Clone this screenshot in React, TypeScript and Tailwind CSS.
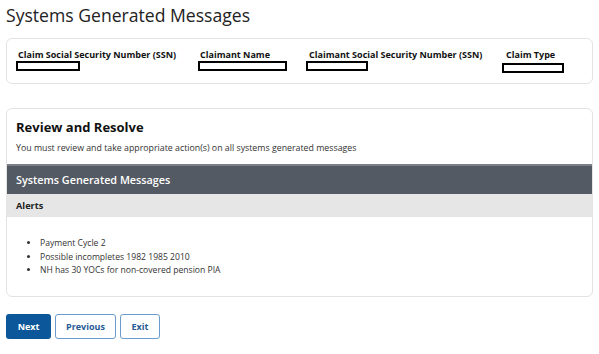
export default function App() {
    const fields = [
        { label: 'Claim Social Security Number (SSN)', col: 'w-[182px]', box: 'w-[64px] ml-[-2px]' },
        { label: 'Claimant Name', col: 'w-[109px]', box: 'w-[89px] ml-[-2px]' },
        { label: 'Claimant Social Security Number (SSN)', col: 'w-[197px]', box: 'w-[62px] ml-[-3px]' },
        { label: 'Claim Type', col: 'w-[70px]', box: 'w-[62px] ml-[-4px] mt-[2px]' },
    ]

    const alerts = [
        'Payment Cycle 2',
        'Possible incompletes 1982 1985 2010',
        'NH has 30 YOCs for non-covered pension PIA',
    ]

    return (
        <div className="min-h-screen bg-white px-[6px] pt-[1px] text-[#222] font-['Open_Sans',sans-serif]">
            <h1 className="text-[17.6px] leading-[28px] text-[#222]">Systems Generated Messages</h1>

            {/* Datos del reclamo */}
            <div className="mt-[9px] h-[46px] rounded-[6px] border border-[#e3e3e3] flex pl-[11px] pt-[9px]">
                {fields.map((f) => (
                    <div key={f.label} className={`flex flex-col shrink-0 ${f.col}`}>
                        <span className="whitespace-nowrap text-[9px] leading-[13px] font-bold text-[#111]">{f.label}</span>
                        <span className={`h-[10px] border-2 border-black ${f.box}`}></span>
                    </div>
                ))}
            </div>

            {/* Revisar y resolver */}
            <div className="mt-[24px] h-[189px] rounded-[6px] border border-[#e3e3e3] overflow-hidden">
                <div className="px-[9px] pt-[8px]">
                    <h2 className="text-[13px] leading-[20px] font-bold text-[#111]">Review and Resolve</h2>
                    <p className="mt-[4px] text-[8.8px] leading-[14px] text-[#333]">
                        You must review and take appropriate action(s) on all systems generated messages
                    </p>
                </div>
                <div className="mt-[9px] h-[30px] bg-[#545a63] border-t-2 border-[#7b8088] flex items-center px-[9px]">
                    <span className="text-[10.8px] font-semibold text-white">Systems Generated Messages</span>
                </div>
                <div className="h-[23px] bg-[#e6e6e6] flex items-center px-[9px]">
                    <span className="text-[9.2px] font-bold text-[#222]">Alerts</span>
                </div>
                <ul className="mt-[20px] pl-[33px] list-disc text-[8.6px] leading-[13.5px] text-[#333]">
                    {alerts.map((a) => (
                        <li key={a}>{a}</li>
                    ))}
                </ul>
            </div>

            <div className="mt-[17px] flex gap-[4px]">
                <button className="h-[25px] w-[45px] rounded-[3px] bg-[#0b5799] text-white text-[9px] font-bold">Next</button>
                <button className="h-[25px] w-[61px] rounded-[3px] border border-[#6a9bcc] text-[#1f5a96] text-[9px] font-bold">Previous</button>
                <button className="h-[25px] w-[40px] rounded-[3px] border border-[#6a9bcc] text-[#1f5a96] text-[9px] font-bold">Exit</button>
            </div>
        </div>
    )
}
